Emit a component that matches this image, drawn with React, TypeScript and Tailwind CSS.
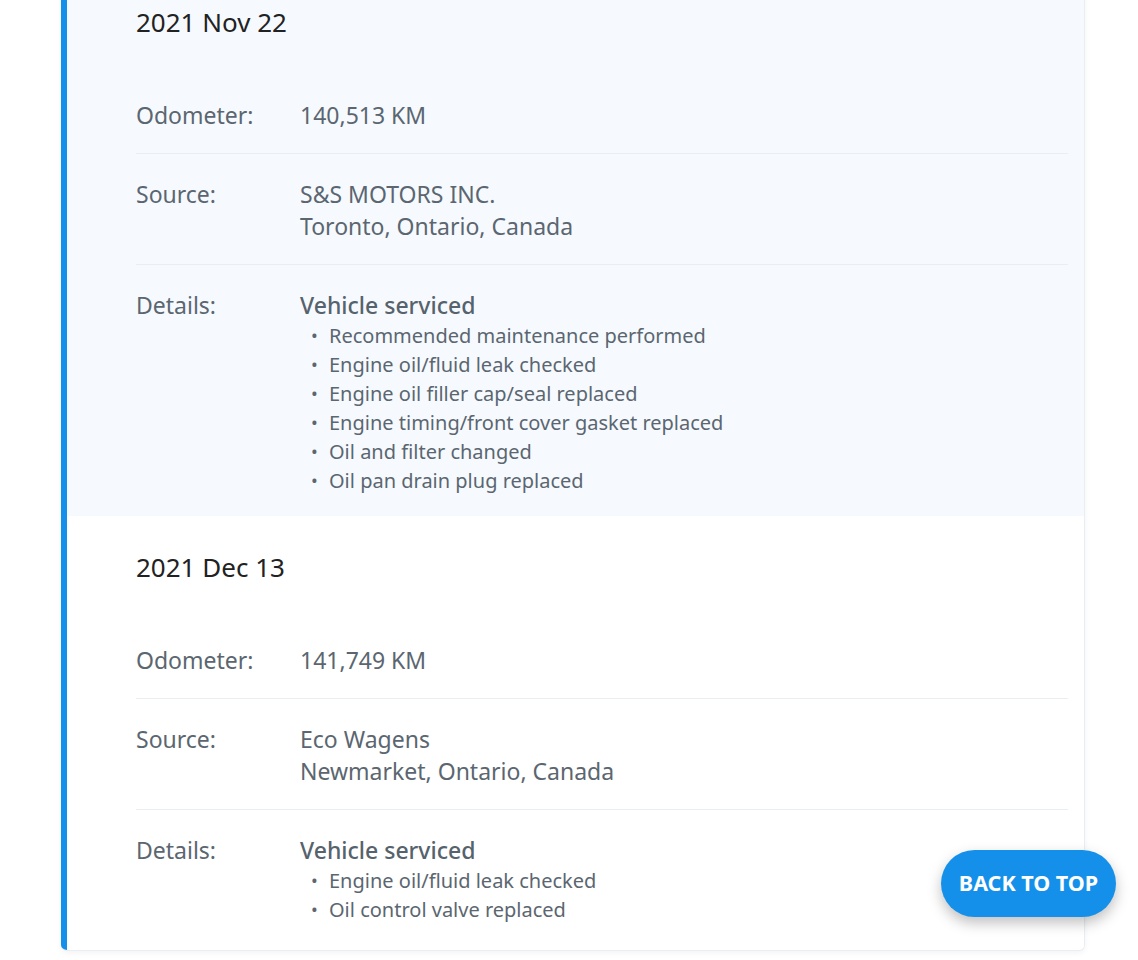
import React from "react";

type Entry = {
  date: string;
  odometer: string;
  source: string[];
  details: string;
  items: string[];
  highlight?: boolean;
};

const entries: Entry[] = [
  {
    date: "2021 Nov 22",
    odometer: "140,513 KM",
    source: ["S&S MOTORS INC.", "Toronto, Ontario, Canada"],
    details: "Vehicle serviced",
    items: [
      "Recommended maintenance performed",
      "Engine oil/fluid leak checked",
      "Engine oil filler cap/seal replaced",
      "Engine timing/front cover gasket replaced",
      "Oil and filter changed",
      "Oil pan drain plug replaced",
    ],
    highlight: true,
  },
  {
    date: "2021 Dec 13",
    odometer: "141,749 KM",
    source: ["Eco Wagens", "Newmarket, Ontario, Canada"],
    details: "Vehicle serviced",
    items: ["Engine oil/fluid leak checked", "Oil control valve replaced"],
  },
];

function Row({
  label,
  children,
  last,
}: {
  label: string;
  children: React.ReactNode;
  last?: boolean;
}) {
  return (
    <div
      className={`flex pt-6 ${last ? "" : "pb-[22px] border-b border-[#e9eef2]"}`}
    >
      <div className="w-[164px] shrink-0 text-[23px] leading-[32px] text-[#5b6670]">
        {label}
      </div>
      <div className="flex-1 text-[23px] leading-[32px] text-[#5b6670]">{children}</div>
    </div>
  );
}

export default function App() {
  return (
    <div
      className="h-[960px] overflow-hidden bg-white relative"
      style={{ fontFamily: '"Noto Sans", "Open Sans", sans-serif' }}
    >
      <div className="pl-[61px] w-[1085px]">
        <div className="-mt-[30px] flex rounded-md overflow-hidden border border-[#e9eef2] border-l-0 bg-white shadow-[0_2px_6px_rgba(0,0,0,0.05)]">
          <div className="w-[6px] shrink-0 bg-[#1590ea]" />
          <div className="flex-1">
            {entries.map((e, i) => (
              <div
                key={i}
                className={`pl-[69px] pr-4 pt-9 ${
                  e.highlight ? "bg-[#f6faff] pb-[21px]" : "bg-white pb-[26px]"
                }`}
              >
                <div className="text-[26px] leading-[30px] text-[#222] mb-[38px]">
                  {e.date}
                </div>
                <Row label="Odometer:">{e.odometer}</Row>
                <Row label="Source:">
                  {e.source.map((s, j) => (
                    <div key={j}>{s}</div>
                  ))}
                </Row>
                <Row label="Details:" last>
                  <div className="font-medium text-[#56626c]">{e.details}</div>
                  <ul className="text-[20px] leading-[29px]">
                    {e.items.map((it, j) => (
                      <li key={j} className="flex">
                        <span className="w-[29px] shrink-0 text-center text-[18px]">•</span>
                        <span>{it}</span>
                      </li>
                    ))}
                  </ul>
                </Row>
              </div>
            ))}
          </div>
        </div>
      </div>
      <button className="absolute right-[22px] bottom-[43px] w-[175px] h-[67px] rounded-full bg-[#1590ea] text-white font-bold text-[21.5px] shadow-[0_6px_14px_rgba(0,0,0,0.25)]">
        BACK TO TOP
      </button>
    </div>
  );
}
